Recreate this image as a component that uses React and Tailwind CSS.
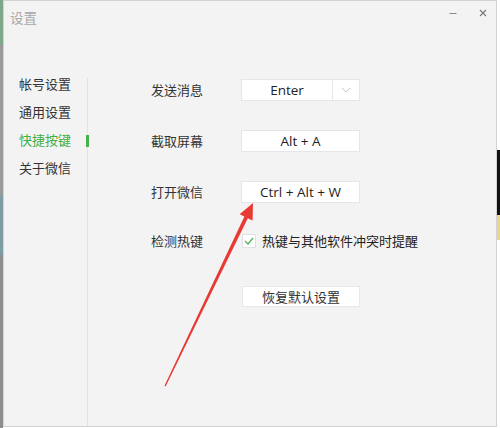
import React from 'react';

const cjk = { fontFamily: '"Noto Sans CJK SC", "Noto Sans", sans-serif' };
const latin = { fontFamily: '"Open Sans", "Noto Sans CJK SC", sans-serif' };

const navItems = ['帐号设置', '通用设置', '快捷按键', '关于微信'];

function KeyBox({ value, dropdown }) {
  return (
    <div className="flex h-[22px] w-[119px] border border-[#e6e6e6] bg-white text-[13.5px] text-[#222]" style={latin}>
      <div className="flex flex-1 items-center justify-center">{value}</div>
      {dropdown && (
        <div className="flex w-[27px] items-center justify-center border-l border-[#e6e6e6]">
          <svg width="10" height="6" viewBox="0 0 10 6" fill="none" stroke="#c8c8c8" strokeWidth="1">
            <path d="M1 1l4 4 4-4" />
          </svg>
        </div>
      )}
    </div>
  );
}

export default function App() {
  return (
    <div className="relative flex h-[428px] w-[500px] overflow-hidden bg-white" style={cjk}>
      {/* desktop peeking out on the left */}
      <div className="flex w-[3px] flex-col">
        <div className="h-[45px] bg-[#7fa88a]" />
        <div className="h-[150px] bg-[#9a9a9a]" />
        <div className="h-[60px] bg-[#7e9ca4]" />
        <div className="flex-1 bg-[#8d8d8d]" />
      </div>

      <div className="flex h-[427px] w-[494px] flex-col border border-[#d2d2d2] bg-[#f3f3f3]">
        {/* title bar */}
        <div className="flex h-[69px] items-start justify-between">
          <span className="ml-[6px] mt-[6px] text-[13.5px] text-[#a8a8a8]">设置</span>
          <div className="mr-[9px] mt-[5px] flex items-center gap-[22px] text-[#8a8a8a]">
            <svg width="8" height="12" viewBox="0 0 8 12">
              <path d="M0.5 7.5h7" stroke="#8a8a8a" strokeWidth="1" />
            </svg>
            <svg width="8" height="12" viewBox="0 0 8 12">
              <path d="M1 4l6 6M7 4l-6 6" stroke="#7a7a7a" strokeWidth="1.2" />
            </svg>
          </div>
        </div>

        <div className="flex flex-1">
          {/* sidebar */}
          <div className="flex w-[83px] flex-col">
            {navItems.map((item, i) => (
              <div
                key={item}
                className={`flex h-[28px] items-center pl-[15px] text-[13px] ${i === 2 ? 'text-[#3fae43]' : 'text-[#333]'}`}
              >
                {item}
              </div>
            ))}
          </div>

          {/* content */}
          <div className="relative mt-[8px] flex flex-1 flex-col border-l border-[#e2e2e2] pl-[63px] pt-[1px]">
            <div className="absolute left-[-2px] top-[57px] h-[12px] w-[3px] bg-[#46b34a]" />

            <div className="flex h-[22px] items-center">
              <span className="w-[90px] text-[13px] text-[#333]">发送消息</span>
              <KeyBox value="Enter" dropdown />
            </div>
            <div className="mt-[29px] flex h-[22px] items-center">
              <span className="w-[90px] text-[13px] text-[#333]">截取屏幕</span>
              <KeyBox value="Alt + A" />
            </div>
            <div className="mt-[29px] flex h-[22px] items-center">
              <span className="w-[90px] text-[13px] text-[#333]">打开微信</span>
              <KeyBox value="Ctrl + Alt + W" />
            </div>
            <div className="mt-[27px] flex h-[22px] items-center">
              <span className="w-[91px] text-[13px] text-[#333]">检测热键</span>
              <div className="flex h-[14px] w-[14px] items-center justify-center border border-[#e2e2e2] bg-white">
                <svg width="10" height="8" viewBox="0 0 10 8" fill="none" stroke="#4caf50" strokeWidth="1.2">
                  <path d="M1 4l3 3 5-6" />
                </svg>
              </div>
              <span className="ml-[6px] text-[13px] text-[#222]">热键与其他软件冲突时提醒</span>
            </div>
            <div className="ml-[91px] mt-[34px] flex h-[21px] w-[118px] items-center justify-center border border-[#e8e8e8] bg-white text-[13px] text-[#333]">
              恢复默认设置
            </div>
          </div>
        </div>
      </div>

      {/* desktop peeking out on the right */}
      <div className="flex w-[3px] flex-col bg-white">
        <div className="h-[150px]" />
        <div className="h-[65px] bg-[#111]" />
        <div className="h-[25px] bg-[#e8d690]" />
        <div className="flex-1" />
      </div>

      {/* red annotation arrow */}
      <svg className="pointer-events-none absolute left-0 top-0" width="500" height="428" viewBox="0 0 500 428">
        <polygon
          fill="#e83a33"
          points="253,203 252.6,220.6 247.8,218.2 165.6,386.4 164.5,385.8 244.4,216.6 239.6,214.2"
        />
      </svg>
    </div>
  );
}
